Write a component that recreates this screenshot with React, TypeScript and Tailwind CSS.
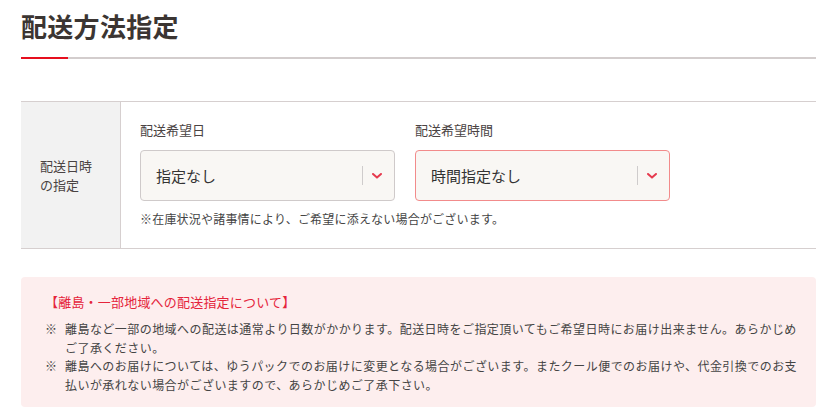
import React from 'react';

type SelectProps = {
    value: string;
    error?: boolean;
};

// セレクトボックス風の表示
function FakeSelect({ value, error }: SelectProps) {
    return (
        <div
            className={`relative flex h-[51px] w-[255px] items-center rounded-[4px] border bg-[#f9f7f4] pl-[15px] ${error ? 'border-[#f28b8b]' : 'border-[#cfcaca]'}`}
        >
            <span className="text-[15px] leading-none text-[#333]">{value}</span>
            <span className="absolute right-[31px] top-[15px] h-[19px] w-px bg-[#cfcccc]" />
            <svg className="absolute right-[12px] top-[22px]" width="10" height="6" viewBox="0 0 10 6" fill="none">
                <path d="M1 1l4 3.6L9 1" stroke="#e63a4e" strokeWidth="2" strokeLinecap="round" strokeLinejoin="round" />
            </svg>
        </div>
    );
}

export default function App() {
    return (
        <div className="min-h-[419px] bg-white font-['Noto_Sans_CJK_JP',sans-serif] text-[#333]">
            <div className="ml-[21px] w-[795px] pt-[6px]">
                {/* 見出し */}
                <h1 className="text-[26px] font-bold leading-[39px] tracking-[0.3px] text-[#3b3532]">配送方法指定</h1>
                <div className="mt-[12px] flex h-[2px]">
                    <div className="w-[47px] bg-[#e60f1e]" />
                    <div className="flex-1 bg-[#d3cdcd]" />
                </div>

                {/* 配送日時テーブル */}
                <div className="mt-[42px] flex border-y border-[#d6cfcf]">
                    <div className="flex w-[100px] items-center border-r border-[#d6cfcf] bg-[#f2f2f2] pl-[19px] text-[13px] leading-[19px] text-[#4a4343]">
                        配送日時
                        <br />
                        の指定
                    </div>
                    <div className="flex-1 pb-[20px] pl-[19px] pt-[18px]">
                        <div className="flex gap-[20px]">
                            <div>
                                <p className="mb-[10px] text-[13px] leading-[20px] text-[#4a4343]">配送希望日</p>
                                <FakeSelect value="指定なし" />
                            </div>
                            <div>
                                <p className="mb-[10px] text-[13px] leading-[20px] text-[#4a4343]">配送希望時間</p>
                                <FakeSelect value="時間指定なし" error />
                            </div>
                        </div>
                        <p className="mt-[9px] text-[12px] leading-[18px] tracking-[0.2px] text-[#444]">
                            ※在庫状況や諸事情により、ご希望に添えない場合がございます。
                        </p>
                    </div>
                </div>

                {/* 離島の注意書き */}
                <div className="mt-[28px] rounded-[4px] bg-[#fdeeee] pb-[13px] pl-[24px] pr-[18px] pt-[15px]">
                    <p className="text-[13px] leading-[20px] tracking-[0.2px] text-[#e5243b]">【離島・一部地域への配送指定について】</p>
                    <ul className="mt-[8px] text-[12px] leading-[18.5px] tracking-[0.45px] text-[#444]">
                        <li className="flex">
                            <span className="w-[20px] shrink-0">※</span>
                            <span>
                                離島など一部の地域への配送は通常より日数がかかります。配送日時をご指定頂いてもご希望日時にお届け出来ません。あらかじめご了承ください。
                            </span>
                        </li>
                        <li className="flex">
                            <span className="w-[20px] shrink-0">※</span>
                            <span>
                                離島へのお届けについては、ゆうパックでのお届けに変更となる場合がございます。またクール便でのお届けや、代金引換でのお支払いが承れない場合がございますので、あらかじめご了承下さい。
                            </span>
                        </li>
                    </ul>
                </div>
            </div>
        </div>
    );
}
